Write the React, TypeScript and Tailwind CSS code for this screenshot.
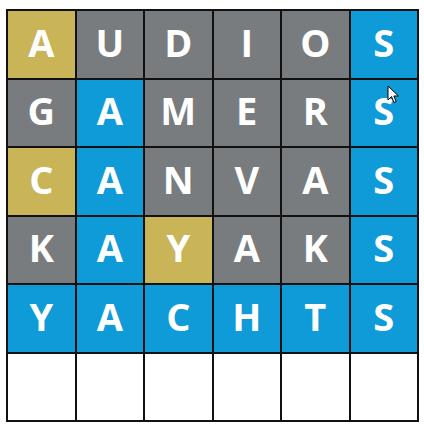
import React from 'react';

type Tile = { ch: string; c: 'g' | 'x' | 'b' | 'e' };

const rows: string[] = ['AUDIOS', 'GAMERS', 'CANVAS', 'KAYAKS', 'YACHTS', ''];
const colors: string[] = ['gxxxxb', 'xbxxxb', 'gbxxxb', 'xbgxxb', 'bbbbbb', 'eeeeee'];

const bgFor: Record<Tile['c'], string> = {
    g: 'bg-[#c9b458]',
    x: 'bg-[#787c7e]',
    b: 'bg-[#0f9ad8]',
    e: 'bg-white',
};

export default function App() {
    const tiles: Tile[] = [];
    rows.forEach((word, r) => {
        for (let i = 0; i < 6; i++) {
            tiles.push({ ch: word[i] ?? '', c: colors[r][i] as Tile['c'] });
        }
    });

    return (
        <div className="w-[424px] h-[428px] bg-white pt-[9px] pl-[6px] relative">
            <div className="w-[413px] h-[413px] bg-[#111] p-[2px] grid grid-cols-6 grid-rows-6 gap-[2px]">
                {tiles.map((t, i) => (
                    <div
                        key={i}
                        className={`${bgFor[t.c]} flex items-center justify-center pb-[5px] text-white text-[38px] font-bold leading-none`}
                        style={{ fontFamily: '"Open Sans", "DejaVu Sans", sans-serif' }}
                    >
                        {t.ch}
                    </div>
                ))}
            </div>

            {/* mouse cursor */}
            <svg className="absolute left-[387px] top-[85px]" width="14" height="20" viewBox="0 0 14 20">
                <path d="M1 1 L1 15 L4.5 11.5 L7 17.5 L9.2 16.6 L6.8 11 L11.5 11 Z" fill="white" stroke="black" strokeWidth="1" strokeLinejoin="round" />
            </svg>
        </div>
    );
}
